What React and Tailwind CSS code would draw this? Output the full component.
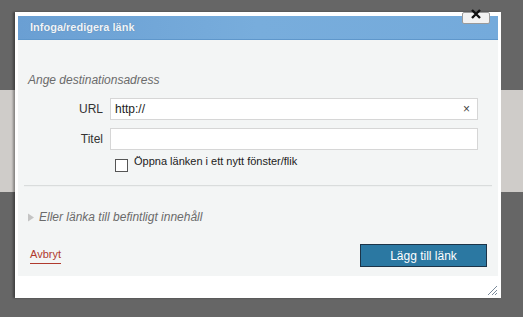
import React from 'react';

const font = { fontFamily: '"Liberation Sans", Arial, sans-serif' };

export default function App() {
  return (
    <div className="relative w-[523px] h-[317px] overflow-hidden bg-[#666666]" style={font}>
      {/* page behind the overlay */}
      <div className="flex flex-col h-full">
        <div className="h-[90px] bg-[#666666]" />
        <div className="h-[102px] bg-[#cfccc9]" />
        <div className="flex-1 bg-[#666666]" />
      </div>

      {/* dialog */}
      <div className="absolute left-[15px] top-[12px] w-[486px] h-[286px] bg-white px-[3px] pt-[4px] flex flex-col shadow-[-2px_0_2px_rgba(0,0,0,0.35)]">
        {/* title bar */}
        <div className="h-[24px] shrink-0 flex items-center pl-[12px] bg-gradient-to-r from-[#6a9fd3] via-[#78addc] to-[#74aadb] border-b border-[#5f97cb]">
          <span className="text-[11px] font-bold text-[#eef4fa] [text-shadow:0_0_1px_rgba(0,0,0,0.25)]">Infoga/redigera länk</span>
        </div>

        {/* panel */}
        <div className="h-[236px] shrink-0 bg-[#f3f5f5] flex flex-col">
          <div className="mt-[32px] pl-[10px] text-[12px] leading-[16px] italic text-[#6b6b6b]">Ange destinationsadress</div>

          <div className="mt-[10px] flex items-center pl-[10px]">
            <label className="w-[75px] text-right text-[12px] text-[#333]">URL</label>
            <div className="ml-[7px] w-[368px] h-[22px] bg-white border border-[#d6d6d6] flex items-center justify-between px-[4px]">
              <span className="text-[12px] text-[#222]">http://</span>
              <span className="text-[12px] text-[#444] leading-none mr-[3px]">×</span>
            </div>
          </div>

          <div className="mt-[8px] flex items-center pl-[10px]">
            <label className="w-[75px] text-right text-[12px] text-[#333]">Titel</label>
            <div className="ml-[7px] w-[368px] h-[22px] bg-white border border-[#d6d6d6]" />
          </div>

          <div className="mt-[4px] flex items-start pl-[97px]">
            <div className="mt-[5px] w-[13px] h-[13px] border border-[#555] bg-white" />
            <span className="ml-[6px] text-[11px] leading-[14px] text-[#222]">Öppna länken i ett nytt fönster/flik</span>
          </div>

          <div className="mt-[13px] mx-[6px] h-[2px] border-t border-[#d9dcdc] bg-[#eef0f0]" />

          <div className="mt-[22px] flex items-center pl-[9px]">
            <svg width="8" height="9" viewBox="0 0 8 9"><path d="M1 0.5 L7 4.5 L1 8.5 Z" fill="#c4c4c4" /></svg>
            <span className="ml-[4px] text-[12px] leading-[16px] italic text-[#6b6b6b]">Eller länka till befintligt innehåll</span>
          </div>

          <div className="mt-[19px] flex items-center justify-between pl-[12px] pr-[11px]">
            <span className="text-[11px] leading-[13px] text-[#b03a2e] border-b border-[#b03a2e] pb-[2px]">Avbryt</span>
            <button className="w-[127px] h-[23px] bg-[#2b78a2] border border-[#1c3448] text-[12px] text-white">Lägg till länk</button>
          </div>
        </div>

        {/* bottom strip */}
        <div className="flex-1 flex justify-end items-end pb-[2px]">
          <svg width="12" height="12" viewBox="0 0 12 12">
            <path d="M11 2 L2 11 M11 6 L6 11 M11 9 L9 11" stroke="#7a8a9a" strokeWidth="1" />
          </svg>
        </div>
      </div>

      {/* close button */}
      <div className="absolute left-[462px] top-[12px] w-[28px] h-[12px] bg-[#f2f2f2] border border-[#9a9a9a] rounded-[2px]" />
      <svg className="absolute left-[470px] top-[8px]" width="12" height="12" viewBox="0 0 12 12">
        <path d="M2 2 L10 10 M10 2 L2 10" stroke="#111" strokeWidth="2.4" />
      </svg>
    </div>
  );
}
